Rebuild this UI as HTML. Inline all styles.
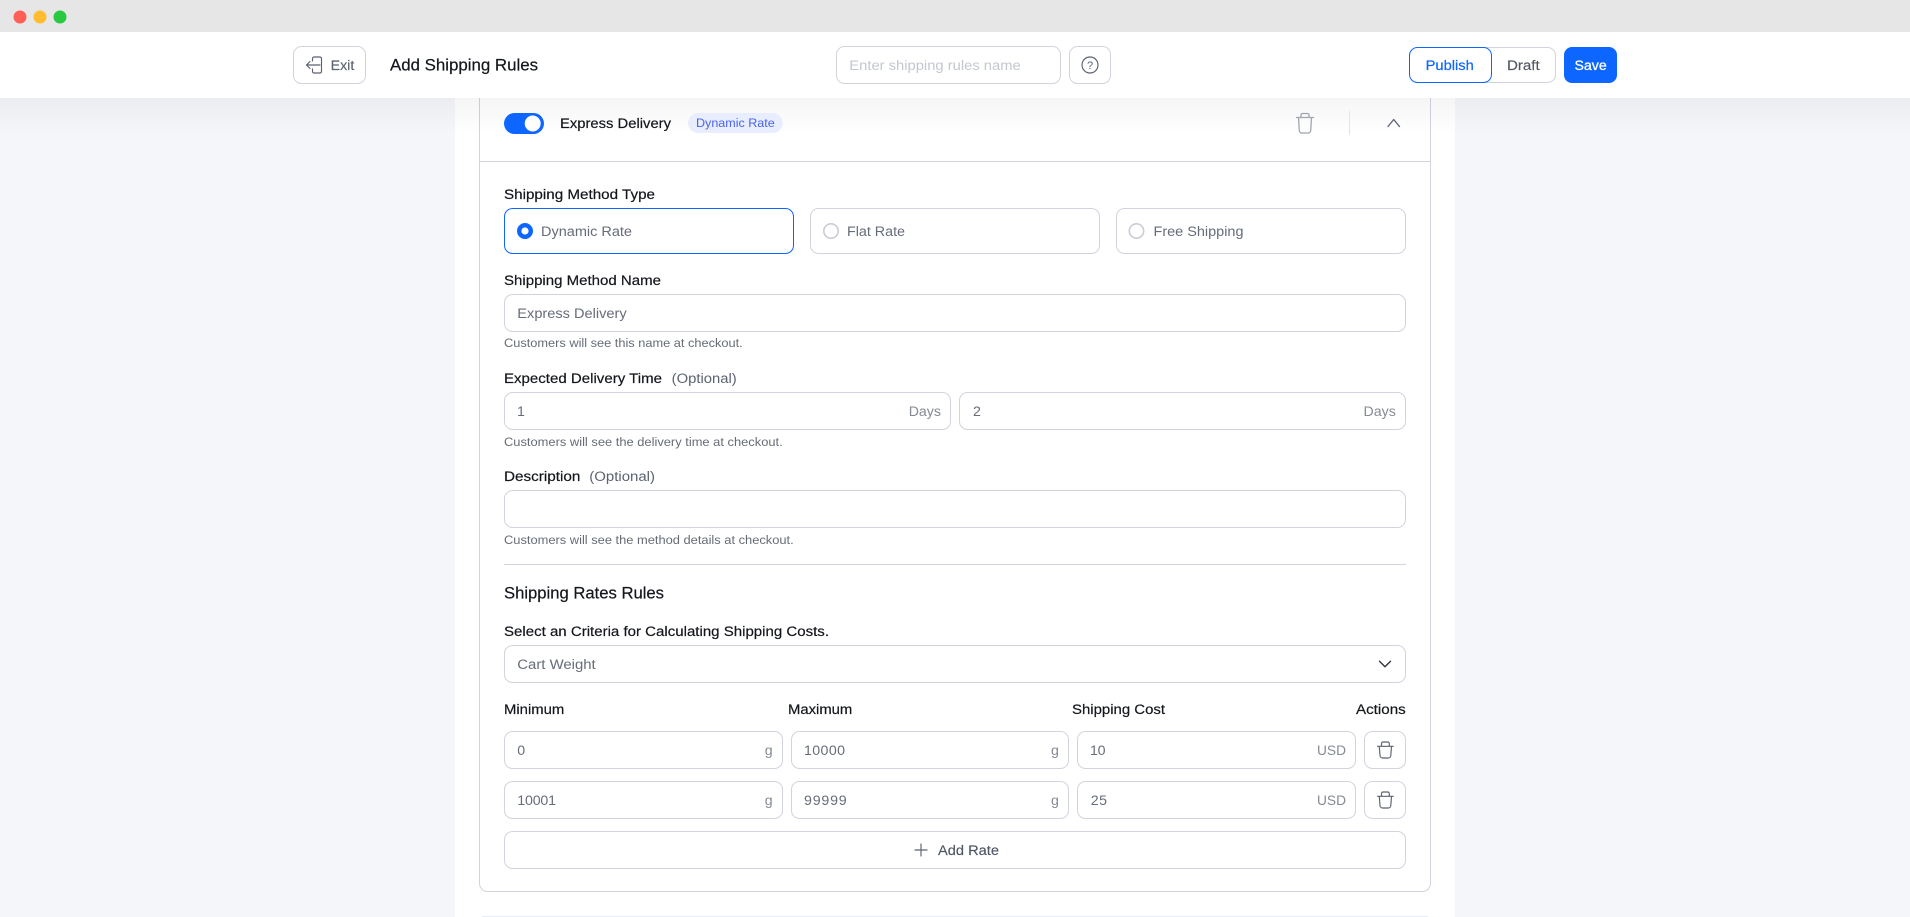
<!DOCTYPE html>
<html lang="en">
<head>
<meta charset="utf-8">
<title>Add Shipping Rules</title>
<style>
html,body{margin:0;padding:0;width:1910px;height:917px;overflow:hidden;background:#f4f6fa}
svg{display:block;position:absolute;left:0;top:0}
text{font-family:"Liberation Sans",Arial,sans-serif;font-size:14.2px}
.b{fill:#fff;stroke:#d1d4de;stroke-width:1}
.lab{fill:#13161c;stroke:#13161c;stroke-width:.2px}
.opt{fill:#5b6270}
.val{fill:#666c79}
.suf{fill:#858a94}
.hlp{fill:#666c77;font-size:12.2px}
.ic{fill:none;stroke:#5b6270;stroke-width:1.15;stroke-linecap:round;stroke-linejoin:round}
</style>
</head>
<body>
<svg xmlns="http://www.w3.org/2000/svg" width="1910" height="917" viewBox="0 0 1910 917">
<defs>
<linearGradient id="sh" x1="0" y1="0" x2="0" y2="1"><stop offset="0" stop-color="#000" stop-opacity=".04"/><stop offset="1" stop-color="#000" stop-opacity="0"/></linearGradient>
</defs>
<!-- page column -->
<rect width="1910" height="917" fill="#f4f6fa"/>
<rect x="455" y="98" width="1000" height="819" fill="#fff"/>
<!-- main card -->
<rect class="b" x="479.5" y="60" width="951" height="831.5" rx="8"/>
<line x1="480" y1="161.5" x2="1430" y2="161.5" stroke="#d1d4de"/>
<!-- next card top edge -->
<rect x="482" y="916" width="946" height="1" fill="#e6eefb"/>

<!-- header shadow -->
<rect x="0" y="98" width="1910" height="36" fill="url(#sh)"/>
<!-- title bar + header -->
<rect width="1910" height="32" fill="#e6e6e6"/>
<rect y="32" width="1910" height="66" fill="#fff"/>
<circle cx="20" cy="17" r="6.5" fill="#ff5f57"/>
<circle cx="40" cy="17" r="6.5" fill="#febc2e"/>
<circle cx="60" cy="17" r="6.5" fill="#28c840"/>

<!-- exit -->
<rect class="b" x="293.5" y="46.5" width="72" height="37" rx="8"/>
<path class="ic" d="M312.5 61V58.6A1.6 1.6 0 0 1 314.1 57H319.9A1.6 1.6 0 0 1 321.5 58.6V71.4A1.6 1.6 0 0 1 319.9 73H314.1A1.6 1.6 0 0 1 312.5 71.4V69M320 65H306.5M310 61.5L306.5 65L310 68.5"/>
<text x="330.6" y="70" textLength="23.7" lengthAdjust="spacingAndGlyphs" fill="#5b6270" stroke="#5b6270" stroke-width=".15">Exit</text>
<text x="390" y="70.5" textLength="148" lengthAdjust="spacingAndGlyphs" style="font-size:16.2px" class="lab">Add Shipping Rules</text>

<!-- name input + help -->
<rect class="b" x="836.5" y="46.5" width="224" height="37" rx="8"/>
<text x="849.3" y="70" textLength="171.4" lengthAdjust="spacingAndGlyphs" fill="#c3c7d0">Enter shipping rules name</text>
<rect class="b" x="1069.5" y="46.5" width="41" height="37" rx="8"/>
<circle cx="1090" cy="65" r="8" class="ic"/>
<text x="1090" y="69" text-anchor="middle" fill="#5b6270" style="font-size:11px">?</text>

<!-- publish / draft / save -->
<rect class="b" x="1470.5" y="47.5" width="85" height="35" rx="8"/>
<rect x="1409.5" y="47.5" width="82" height="35" rx="8" fill="#fff" stroke="#0d66ff"/>
<text x="1425.6" y="70" textLength="48.2" lengthAdjust="spacingAndGlyphs" fill="#0d66ff" stroke="#0d66ff" stroke-width=".22">Publish</text>
<text x="1507" y="70" textLength="32.7" lengthAdjust="spacingAndGlyphs" fill="#4f5663" stroke="#4f5663" stroke-width=".15">Draft</text>
<rect x="1564" y="47" width="53" height="36" rx="8" fill="#0d66ff"/>
<text x="1574.5" y="70" textLength="32.2" lengthAdjust="spacingAndGlyphs" fill="#fff" stroke="#fff" stroke-width=".3">Save</text>

<!-- card header -->
<rect x="504" y="113" width="40" height="21" rx="10.5" fill="#0d66ff"/>
<circle cx="532.7" cy="123.5" r="8" fill="#fff"/>
<text x="560" y="128" textLength="111" lengthAdjust="spacingAndGlyphs" class="lab">Express Delivery</text>
<rect x="688" y="113" width="94.7" height="20" rx="10" fill="#e8eefe"/>
<text x="696" y="127" textLength="78.7" lengthAdjust="spacingAndGlyphs" fill="#4a63ee" style="font-size:12.2px">Dynamic Rate</text>
<path d="M1296.5 117.5H1313.5M1301 117.5V115A1.5 1.5 0 0 1 1302.5 113.5H1307.5A1.5 1.5 0 0 1 1309 115V117.5M1298.5 117.5L1299.3 130.5A2.5 2.5 0 0 0 1301.8 133H1308.2A2.5 2.5 0 0 0 1310.7 130.5L1311.5 117.5" fill="none" stroke="#a0a5ae" stroke-width="1.3" stroke-linecap="round" stroke-linejoin="round"/>
<line x1="1349.5" y1="111" x2="1349.5" y2="135" stroke="#e2e4ea"/>
<path class="ic" d="M1388 126.5L1393.7 119.5L1399.5 126.5" style="stroke-width:1.3"/>

<!-- shipping method type -->
<text x="504" y="199" textLength="151" lengthAdjust="spacingAndGlyphs" class="lab">Shipping Method Type</text>
<rect x="504.5" y="208.5" width="289" height="45" rx="8" fill="#fff" stroke="#0d66ff"/>
<rect class="b" x="810.5" y="208.5" width="289" height="45" rx="8"/>
<rect class="b" x="1116.5" y="208.5" width="289" height="45" rx="8"/>
<circle cx="525" cy="231" r="5.8" fill="#fff" stroke="#0d66ff" stroke-width="4.4"/>
<circle cx="831" cy="231" r="7.2" fill="#fff" stroke="#c8ccd6" stroke-width="1.6"/>
<circle cx="1136.5" cy="231" r="7.2" fill="#fff" stroke="#c8ccd6" stroke-width="1.6"/>
<text x="541" y="236" textLength="91" lengthAdjust="spacingAndGlyphs" class="val">Dynamic Rate</text>
<text x="847" y="236" textLength="58" lengthAdjust="spacingAndGlyphs" class="val">Flat Rate</text>
<text x="1153.5" y="236" textLength="90" lengthAdjust="spacingAndGlyphs" class="val">Free Shipping</text>

<!-- method name -->
<text x="504" y="285" textLength="157" lengthAdjust="spacingAndGlyphs" class="lab">Shipping Method Name</text>
<rect class="b" x="504.5" y="294.5" width="901" height="37" rx="8"/>
<text x="517.3" y="318" textLength="109.4" lengthAdjust="spacingAndGlyphs" class="val">Express Delivery</text>
<text x="504" y="347" textLength="238.7" lengthAdjust="spacingAndGlyphs" class="hlp">Customers will see this name at checkout.</text>

<!-- expected delivery -->
<text x="504" y="383" textLength="158" lengthAdjust="spacingAndGlyphs" class="lab">Expected Delivery Time</text>
<text x="671.7" y="383" textLength="65" lengthAdjust="spacingAndGlyphs" class="opt">(Optional)</text>
<rect class="b" x="504.5" y="392.5" width="446" height="37" rx="8"/>
<rect class="b" x="959.5" y="392.5" width="446" height="37" rx="8"/>
<text x="517" y="416" class="val">1</text>
<text x="908.7" y="416" textLength="32.3" lengthAdjust="spacingAndGlyphs" class="suf">Days</text>
<text x="973" y="416" class="val">2</text>
<text x="1363.5" y="416" textLength="32.3" lengthAdjust="spacingAndGlyphs" class="suf">Days</text>
<text x="504" y="446" textLength="278.7" lengthAdjust="spacingAndGlyphs" class="hlp">Customers will see the delivery time at checkout.</text>

<!-- description -->
<text x="504" y="481" textLength="76.3" lengthAdjust="spacingAndGlyphs" class="lab">Description</text>
<text x="589.3" y="481" textLength="65.7" lengthAdjust="spacingAndGlyphs" class="opt">(Optional)</text>
<rect class="b" x="504.5" y="490.5" width="901" height="37" rx="8"/>
<text x="504" y="544" textLength="289.7" lengthAdjust="spacingAndGlyphs" class="hlp">Customers will see the method details at checkout.</text>
<line x1="504" y1="564.5" x2="1406" y2="564.5" stroke="#d1d4de"/>

<!-- rates -->
<text x="504" y="598.5" textLength="160" lengthAdjust="spacingAndGlyphs" class="lab" style="font-size:16.2px">Shipping Rates Rules</text>
<text x="504" y="636" textLength="325" lengthAdjust="spacingAndGlyphs" class="lab">Select an Criteria for Calculating Shipping Costs.</text>
<rect class="b" x="504.5" y="645.5" width="901" height="37" rx="8"/>
<text x="517.3" y="669" textLength="78.4" lengthAdjust="spacingAndGlyphs" class="val">Cart Weight</text>
<path d="M1379.5 661.3L1385 666.7L1390.5 661.3" fill="none" stroke="#2f3540" stroke-width="1.4" stroke-linecap="round" stroke-linejoin="round"/>

<text x="504" y="714" textLength="60.3" lengthAdjust="spacingAndGlyphs" class="lab">Minimum</text>
<text x="788" y="714" textLength="64.3" lengthAdjust="spacingAndGlyphs" class="lab">Maximum</text>
<text x="1072" y="714" textLength="93" lengthAdjust="spacingAndGlyphs" class="lab">Shipping Cost</text>
<text x="1356" y="714" textLength="49.7" lengthAdjust="spacingAndGlyphs" class="lab">Actions</text>

<!-- row 1 -->
<rect class="b" x="504.5" y="731.5" width="278" height="37" rx="8"/>
<rect class="b" x="791.5" y="731.5" width="277" height="37" rx="8"/>
<rect class="b" x="1077.5" y="731.5" width="278" height="37" rx="8"/>
<rect class="b" x="1364.5" y="731.5" width="41" height="37" rx="8"/>
<text x="517.3" y="755" class="val">0</text>
<text x="764.7" y="755" class="suf">g</text>
<text x="804" y="755" textLength="41" lengthAdjust="spacing" class="val">10000</text>
<text x="1051" y="755" class="suf">g</text>
<text x="1090" y="755" textLength="15.5" lengthAdjust="spacing" class="val">10</text>
<text x="1317" y="755" textLength="29" lengthAdjust="spacingAndGlyphs" class="suf">USD</text>
<path class="ic" d="M1377.5 746.3H1393.3M1381.5 746.3V743.6A1.6 1.6 0 0 1 1383.1 742H1387.7A1.6 1.6 0 0 1 1389.3 743.6V746.3M1379.3 746.3L1380 755.5A2.5 2.5 0 0 0 1382.5 758H1388.3A2.5 2.5 0 0 0 1390.8 755.5L1391.5 746.3"/>

<!-- row 2 -->
<rect class="b" x="504.5" y="781.5" width="278" height="37" rx="8"/>
<rect class="b" x="791.5" y="781.5" width="277" height="37" rx="8"/>
<rect class="b" x="1077.5" y="781.5" width="278" height="37" rx="8"/>
<rect class="b" x="1364.5" y="781.5" width="41" height="37" rx="8"/>
<text x="517.3" y="805" textLength="38.7" lengthAdjust="spacing" class="val">10001</text>
<text x="764.7" y="805" class="suf">g</text>
<text x="804" y="805" textLength="42.7" lengthAdjust="spacing" class="val">99999</text>
<text x="1051" y="805" class="suf">g</text>
<text x="1090.7" y="805" textLength="16.3" lengthAdjust="spacing" class="val">25</text>
<text x="1317" y="805" textLength="29" lengthAdjust="spacingAndGlyphs" class="suf">USD</text>
<path class="ic" d="M1377.5 796.3H1393.3M1381.5 796.3V793.6A1.6 1.6 0 0 1 1383.1 792H1387.7A1.6 1.6 0 0 1 1389.3 793.6V796.3M1379.3 796.3L1380 805.5A2.5 2.5 0 0 0 1382.5 808H1388.3A2.5 2.5 0 0 0 1390.8 805.5L1391.5 796.3"/>

<!-- add rate -->
<rect class="b" x="504.5" y="831.5" width="901" height="37" rx="8"/>
<path class="ic" d="M915 850H927M921 844V856"/>
<text x="938" y="855" textLength="61" lengthAdjust="spacingAndGlyphs" fill="#4f5663" stroke="#4f5663" stroke-width=".15">Add Rate</text>
</svg>
</body>
</html>
